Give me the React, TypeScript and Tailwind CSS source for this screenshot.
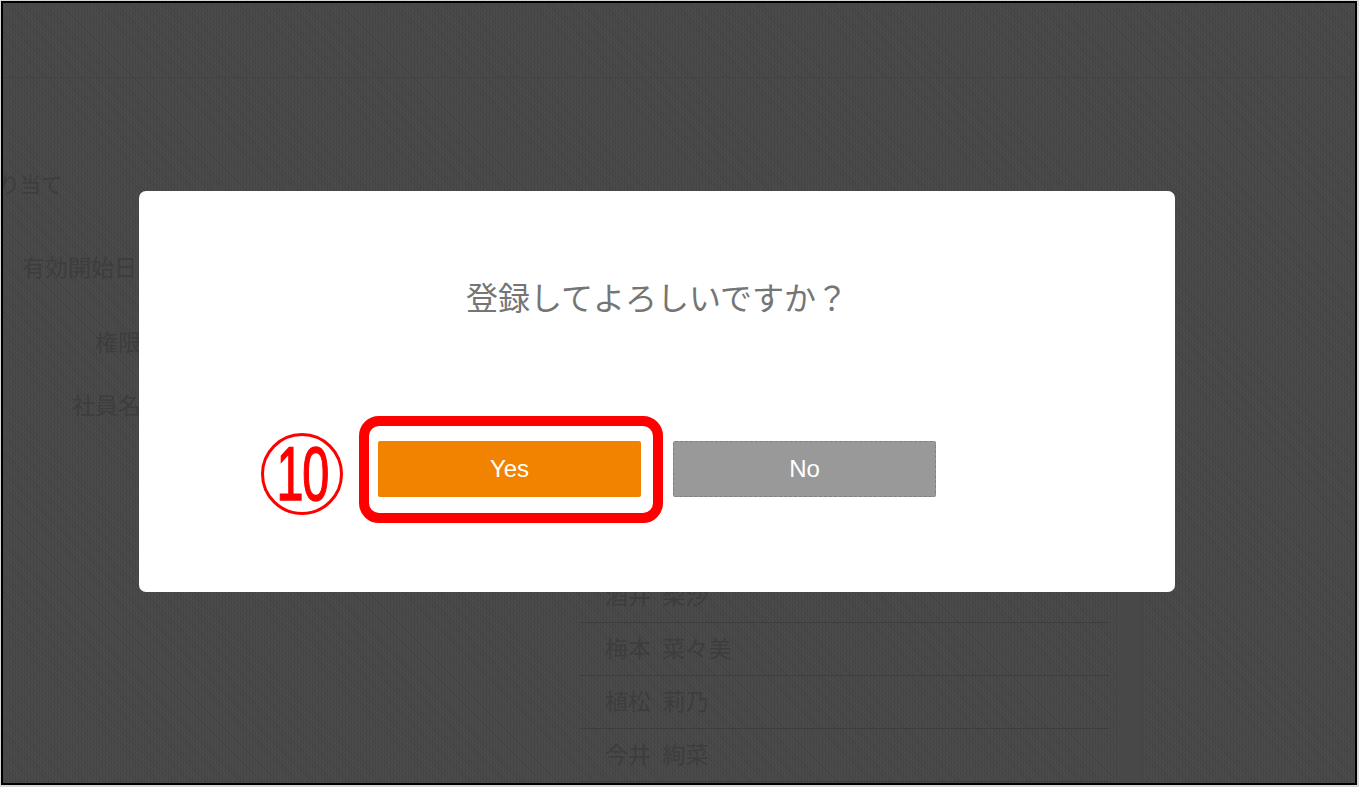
const names = ['酒井 梨沙', '梅本 菜々美', '植松 莉乃', '今井 絢菜'];

const App = () => (
  <div className="w-[1359px] h-[787px] p-px bg-[#d8d8d8] overflow-hidden font-['Liberation_Sans','Noto_Sans_CJK_JP',sans-serif]">
    <div className="relative w-[1356px] h-[784px] border-2 border-black overflow-hidden bg-[#4b4b4b] bg-[repeating-linear-gradient(45deg,rgba(0,0,0,0.07)_0px,rgba(0,0,0,0.07)_1px,transparent_1px,transparent_3px),repeating-linear-gradient(90deg,rgba(0,0,0,0.06)_0px,rgba(0,0,0,0.06)_1px,transparent_1px,transparent_3px)]">
      {/* Dimmed page behind the dialog */}
      <div className="h-[75px] border-b border-[#434343]" />
      <div className="text-[#3d3d3d]">
        <div className="mt-[92px] -ml-[4px] text-[21px] leading-[30px]">り当て</div>
        <div className="mt-[54px] ml-[19px] text-[23px] leading-[28px] whitespace-nowrap">有効開始日</div>
        <div className="mt-[47px] ml-[92px] text-[23px] leading-[28px]">権限</div>
        <div className="mt-[35px] ml-[69px] text-[23px] leading-[28px]">社員名</div>
        <div className="flex mt-[150px] ml-[577px]">
          <div className="w-[529px]">
            {names.map((name) => (
              <div key={name} className="h-[53px] pl-[25px] pt-[12px] border-b border-[#3d3d3d] text-[23px] leading-[28px] [word-spacing:5px] whitespace-nowrap">
                {name}
              </div>
            ))}
          </div>
          <div className="w-[26px] ml-[7px] bg-[#484848] border-x border-[#444444]" />
        </div>
      </div>

      {/* Confirm dialog */}
      <div className="absolute left-[136px] top-[188px] w-[1036px] h-[401px] bg-white rounded-[7px]">
        <p className="pt-[90px] text-center text-[32px] leading-[36px] text-[#757575]">登録してよろしいですか？</p>
        <div className="flex gap-[32px] mt-[124px] ml-[239px]">
          <button className="w-[263px] h-[56px] bg-[#f28300] rounded-[2px] text-white text-[24px]">Yes</button>
          <button className="w-[263px] h-[56px] bg-[#999999] rounded-[2px] border border-dashed border-[#808080] text-white text-[24px]">No</button>
        </div>

        {/* Annotation */}
        <div className="absolute left-[122px] top-[242px] w-[82px] h-[82px] rounded-full border-[3px] border-[#ff0000] flex items-center justify-center">
          <span className="text-[#ff0000] text-[76px] leading-none scale-x-[0.64] tracking-[-2px] [-webkit-text-stroke:1.5px_#ff0000]">10</span>
        </div>
        <div className="absolute left-[220px] top-[225px] w-[304px] h-[107px] border-[10px] border-[#ff0000] rounded-[20px]" />
      </div>
    </div>
  </div>
);

export default App;
